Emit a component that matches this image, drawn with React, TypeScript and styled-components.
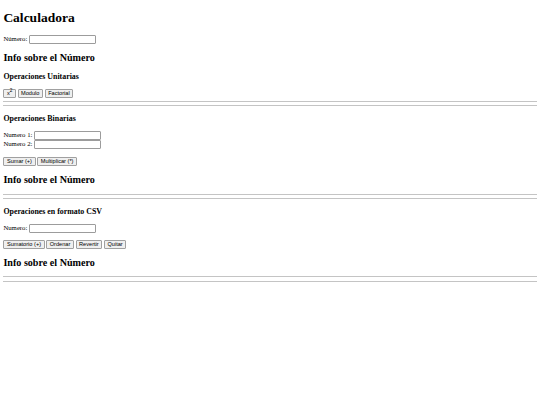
import React from "react";
import styled, { createGlobalStyle } from "styled-components";

const S = 540 / 1280;
const u = (n: number) => `${(n * S).toFixed(3)}px`;

const GlobalStyle = createGlobalStyle`
  html, body { background: #ffffff; }
  body {
    margin: ${u(8)};
    font-family: "Liberation Serif", "Times New Roman", serif;
    font-size: ${u(16)};
    color: #000000;
  }
`;

const Page = styled.main`
  display: block;
`;

const Title = styled.h1`
  font-size: ${u(32)};
  font-weight: bold;
  margin: 6.5px 0 ${u(21.44)};
`;

const Info = styled.h2`
  font-size: ${u(24)};
  font-weight: bold;
  margin: ${u(19.92)} 0;
`;

const SectionTitle = styled.h3`
  font-size: ${u(18.72)};
  font-weight: bold;
  margin: ${u(18.72)} 0;
`;

const Section = styled.section`
  display: block;
`;

const Field = styled.label`
  display: block;
`;

const FieldGroup = styled.div`
  display: flex;
  flex-direction: column;
`;

const TextInput = styled.input`
  box-sizing: border-box;
  width: 66.5px;
  height: ${u(21.33)};
  font-family: "Liberation Sans", Arial, sans-serif;
  font-size: ${u(13.333)};
  padding: ${u(1)} ${u(2)};
  border: 1px solid #9c9c9c;
  border-radius: 1px;
  background: #ffffff;
  vertical-align: baseline;
`;

const ButtonRow = styled.div<{ $offset?: number }>`
  display: flex;
  flex-wrap: wrap;
  gap: 1.7px;
  align-items: center;
  margin-top: ${(p) => u(p.$offset ?? 0)};
`;

const Btn = styled.button`
  box-sizing: border-box;
  height: ${u(21.33)};
  font-family: "Liberation Sans", Arial, sans-serif;
  font-size: ${u(13.333)};
  line-height: normal;
  padding: 0 ${u(6)};
  border: 1px solid #a0a0a0;
  border-radius: 1px;
  background: #efefef;
  color: #000000;
  margin: 0;
`;

const Sup = styled.sup`
  font-size: 0.83em;
  vertical-align: super;
  line-height: 0;
`;

const Rule = styled.hr`
  height: 0;
  margin: ${u(8)} 0;
  border: none;
  border-top: 1px solid #c4c4c4;
`;

const DoubleRule = () => (
  <>
    <Rule />
    <Rule />
  </>
);

export default function App() {
  return (
    <>
      <GlobalStyle />
      <Page>
        <Title>Calculadora</Title>
        <Field>
          Número: <TextInput type="text" />
        </Field>
        <Info>Info sobre el Número</Info>

        <Section>
          <SectionTitle>Operaciones Unitarias</SectionTitle>
          <ButtonRow>
            <Btn>
              x<Sup>2</Sup>
            </Btn>
            <Btn>Modulo</Btn>
            <Btn>Factorial</Btn>
          </ButtonRow>
        </Section>
        <DoubleRule />

        <Section>
          <SectionTitle>Operaciones Binarias</SectionTitle>
          <FieldGroup>
            <Field>
              Numero 1: <TextInput type="text" />
            </Field>
            <Field>
              Numero 2: <TextInput type="text" />
            </Field>
          </FieldGroup>
          <ButtonRow $offset={18.72}>
            <Btn>Sumar (+)</Btn>
            <Btn>Multiplicar (*)</Btn>
          </ButtonRow>
        </Section>
        <Info>Info sobre el Número</Info>
        <DoubleRule />

        <Section>
          <SectionTitle>Operaciones en formato CSV</SectionTitle>
          <Field>
            Numero: <TextInput type="text" />
          </Field>
          <ButtonRow $offset={16}>
            <Btn>Sumatorio (+)</Btn>
            <Btn>Ordenar</Btn>
            <Btn>Revertir</Btn>
            <Btn>Quitar</Btn>
          </ButtonRow>
        </Section>
        <Info>Info sobre el Número</Info>
        <DoubleRule />
      </Page>
    </>
  );
}
